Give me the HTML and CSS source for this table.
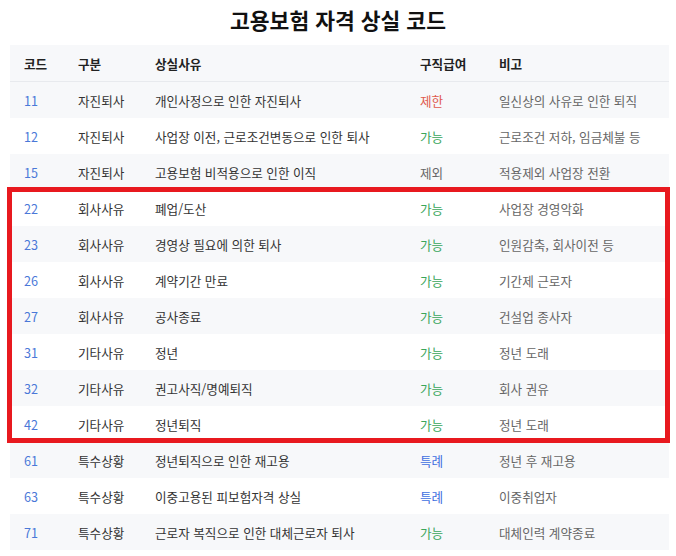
FILE: index.html
```html
<!DOCTYPE html>
<html lang="ko">
<head>
    <meta charset="UTF-8">
    <meta name="viewport" content="width=device-width, initial-scale=1.0">
    <title>고용보험 자격 상실 코드</title>
    <link rel="stylesheet" href="styles.css">
</head>
<body>

    <h1 class="title">고용보험 자격 상실 코드</h1>

    <div class="table-wrap">
        <table class="code-table">
            <colgroup>
                <col class="col-code">
                <col class="col-type">
                <col class="col-reason">
                <col class="col-benefit">
                <col class="col-note">
            </colgroup>
            <thead>
                <tr>
                    <th>코드</th>
                    <th>구분</th>
                    <th>상실사유</th>
                    <th>구직급여</th>
                    <th>비고</th>
                </tr>
            </thead>
            <tbody>
                <tr>
                    <td class="code">11</td><td>자진퇴사</td><td>개인사정으로 인한 자진퇴사</td>
                    <td class="no">제한</td><td class="note">일신상의 사유로 인한 퇴직</td>
                </tr>
                <tr>
                    <td class="code">12</td><td>자진퇴사</td><td>사업장 이전, 근로조건변동으로 인한 퇴사</td>
                    <td class="yes">가능</td><td class="note">근로조건 저하, 임금체불 등</td>
                </tr>
                <tr>
                    <td class="code">15</td><td>자진퇴사</td><td>고용보험 비적용으로 인한 이직</td>
                    <td class="except">제외</td><td class="note">적용제외 사업장 전환</td>
                </tr>
                <tr>
                    <td class="code">22</td><td>회사사유</td><td>폐업/도산</td>
                    <td class="yes">가능</td><td class="note">사업장 경영악화</td>
                </tr>
                <tr>
                    <td class="code">23</td><td>회사사유</td><td>경영상 필요에 의한 퇴사</td>
                    <td class="yes">가능</td><td class="note">인원감축, 회사이전 등</td>
                </tr>
                <tr>
                    <td class="code">26</td><td>회사사유</td><td>계약기간 만료</td>
                    <td class="yes">가능</td><td class="note">기간제 근로자</td>
                </tr>
                <tr>
                    <td class="code">27</td><td>회사사유</td><td>공사종료</td>
                    <td class="yes">가능</td><td class="note">건설업 종사자</td>
                </tr>
                <tr>
                    <td class="code">31</td><td>기타사유</td><td>정년</td>
                    <td class="yes">가능</td><td class="note">정년 도래</td>
                </tr>
                <tr>
                    <td class="code">32</td><td>기타사유</td><td>권고사직/명예퇴직</td>
                    <td class="yes">가능</td><td class="note">회사 권유</td>
                </tr>
                <tr>
                    <td class="code">42</td><td>기타사유</td><td>정년퇴직</td>
                    <td class="yes">가능</td><td class="note">정년 도래</td>
                </tr>
                <tr>
                    <td class="code">61</td><td>특수상황</td><td>정년퇴직으로 인한 재고용</td>
                    <td class="special">특례</td><td class="note">정년 후 재고용</td>
                </tr>
                <tr>
                    <td class="code">63</td><td>특수상황</td><td>이중고용된 피보험자격 상실</td>
                    <td class="special">특례</td><td class="note">이중취업자</td>
                </tr>
                <tr>
                    <td class="code">71</td><td>특수상황</td><td>근로자 복직으로 인한 대체근로자 퇴사</td>
                    <td class="yes">가능</td><td class="note">대체인력 계약종료</td>
                </tr>
            </tbody>
        </table>

        <!-- 회사사유 ~ 기타사유 강조 -->
        <div class="highlight"></div>
    </div>

</body>
</html>
```

FILE: styles.css
```css
body {
    font-family: "Noto Sans CJK KR", "Noto Sans", sans-serif;
    background-color: #fff;
    color: #333;
    margin: 0;
    padding: 0;
}

.title {
    margin: 0;
    padding-top: 5px;
    height: 40px;
    font-size: 21.5px;
    font-weight: bold;
    text-align: center;
    color: #111;
    line-height: 30px;
}

.table-wrap {
    position: relative;
    margin: 0 7px 0 10px;
}

.code-table {
    width: 659px;
    border-collapse: collapse;
    table-layout: fixed;
    font-size: 12.6px;
}

.col-code { width: 54px; }
.col-type { width: 77px; }
.col-reason { width: 265px; }
.col-benefit { width: 79px; }
.col-note { width: 184px; }

.code-table th,
.code-table td {
    height: 36px;
    padding: 0 0 0 14px;
    text-align: left;
    white-space: nowrap;
}

.code-table th {
    height: 36px;
    background-color: #f7f8fa;
    border-bottom: 1px solid #e8eaee;
    font-weight: bold;
    color: #222;
}

.code-table tbody tr:nth-child(odd) {
    background-color: #f7f8fa;
}

.code-table .code {
    color: #4a78d8;
}

.code-table .yes {
    color: #3aa65a;
}

.code-table .no {
    color: #e0584c;
}

.code-table .except {
    color: #666;
}

.code-table .special {
    color: #3f6fe0;
}

.code-table .note {
    color: #666;
}

.highlight {
    position: absolute;
    left: -3px;
    top: 142px;
    width: 653px;
    height: 246px;
    border: 5px solid #e8191f;
    pointer-events: none;
}
```
